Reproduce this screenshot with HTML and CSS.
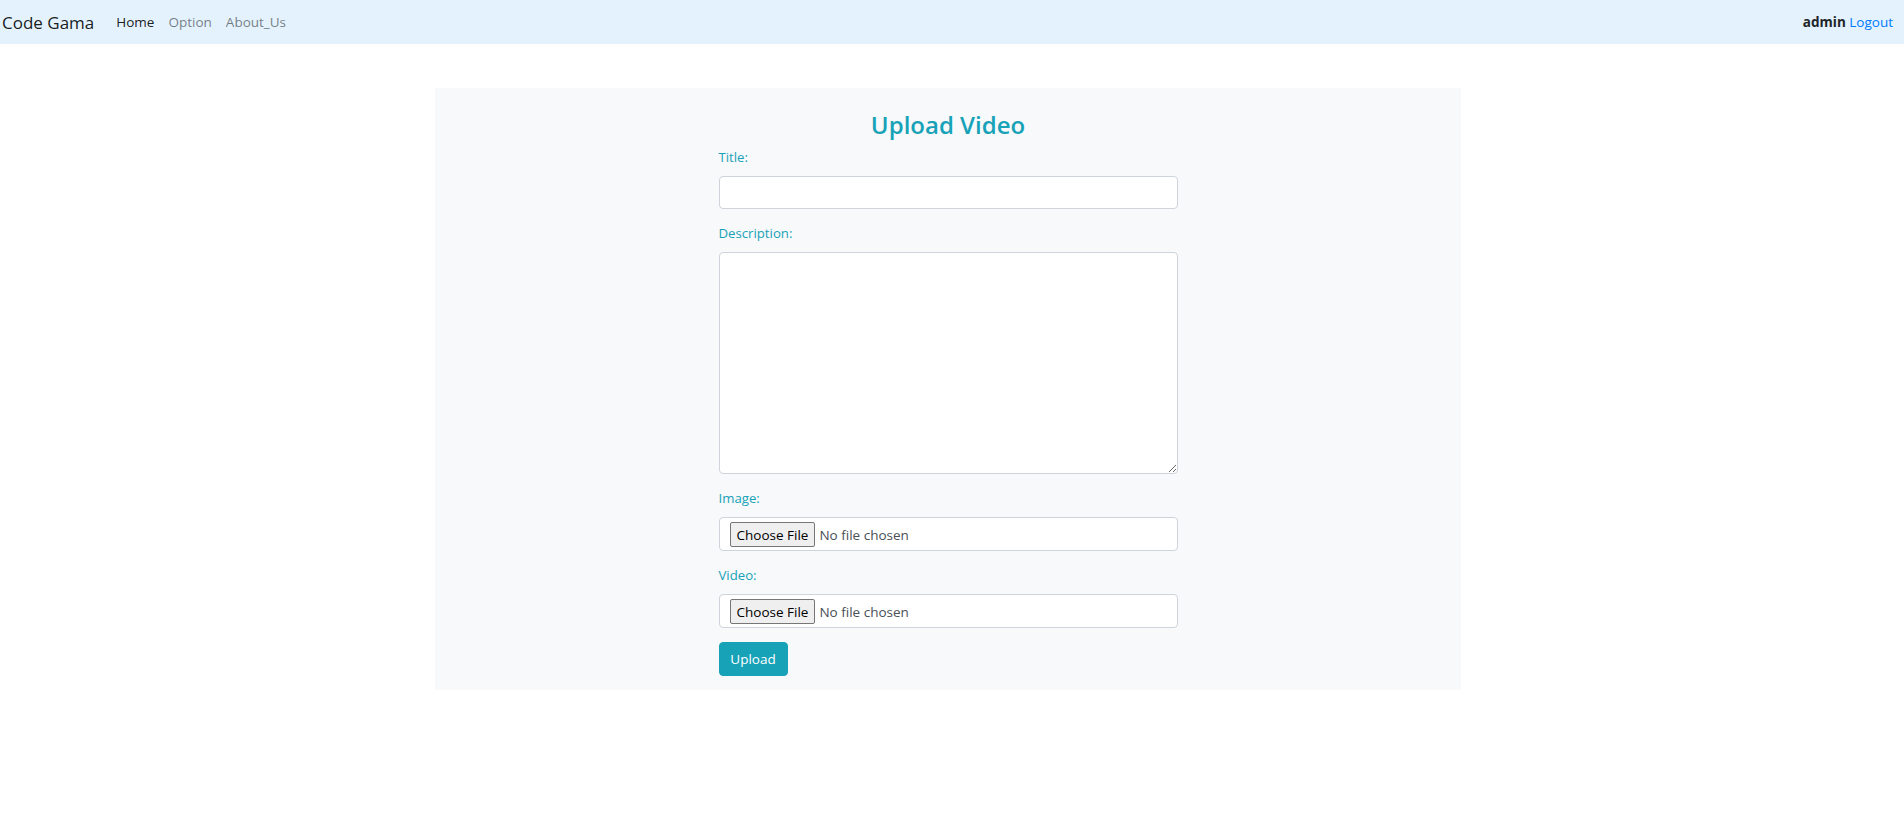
FILE: index.html
```html
<!DOCTYPE html>
<html lang="en">
<head>
<meta charset="utf-8">
<title>Upload Video</title>
<link rel="stylesheet" href="styles.css">
</head>
<body>
<nav class="navbar">
  <a class="brand" href="#">Code Gama</a>
  <ul class="nav-links">
    <li><a class="nav-link active" href="#">Home</a></li>
    <li><a class="nav-link" href="#">Option</a></li>
    <li><a class="nav-link" href="#">About_Us</a></li>
  </ul>
  <div class="nav-user">
    <span class="user-name">admin</span>
    <a class="logout" href="#">Logout</a>
  </div>
</nav>
<main class="page">
  <section class="card">
    <form class="upload-form">
      <h2 class="form-title">Upload Video</h2>
      <div class="form-group">
        <label class="form-label" for="title">Title:</label>
        <input class="form-control" id="title" type="text">
      </div>
      <div class="form-group">
        <label class="form-label" for="desc">Description:</label>
        <textarea class="form-control form-textarea" id="desc"></textarea>
      </div>
      <div class="form-group">
        <label class="form-label" for="image">Image:</label>
        <input class="form-control form-file" id="image" type="file">
      </div>
      <div class="form-group">
        <label class="form-label" for="video">Video:</label>
        <input class="form-control form-file" id="video" type="file">
      </div>
      <button class="btn-upload" type="button">Upload</button>
    </form>
  </section>
</main>
</body>
</html>
```
FILE: styles.css
```css
* { box-sizing: border-box; }
body {
  margin: 0;
  font-family: "Open Sans", "Noto Sans", sans-serif;
  color: #212529;
  background: #fff;
}
.navbar {
  height: 44px;
  background: #e3f2fd;
  display: flex;
  align-items: center;
  padding: 0 11px 0 2px;
}
.brand {
  font-size: 17px;
  color: rgba(0,0,0,.9);
  text-decoration: none;
  margin-right: 15px;
}
.nav-links {
  list-style: none;
  display: flex;
  margin: 0;
  padding: 0;
}
.nav-link {
  display: block;
  padding: 0 7px;
  font-size: 13.5px;
  color: rgba(0,0,0,.5);
  text-decoration: none;
}
.nav-link.active { color: rgba(0,0,0,.9); }
.nav-user {
  margin-left: auto;
  font-size: 13.5px;
}
.user-name { font-weight: 700; color: #212529; }
.logout { color: #007bff; text-decoration: none; }
.page { padding: 44px 8px 0 0; }
.card {
  width: 1026px;
  margin: 0 auto;
  background: #f8f9fa;
  padding: 21px 0 14px;
}
.upload-form {
  width: 459px;
  margin: 0 auto;
}
.form-title {
  margin: 0 0 7px;
  text-align: center;
  font-size: 24px;
  line-height: 31px;
  font-weight: 600;
  color: #17a2b8;
}
.form-group { margin-bottom: 14px; }
.form-label {
  display: block;
  font-size: 13.2px;
  line-height: 21px;
  color: #17a2b8;
  margin-bottom: 8px;
}
.form-control {
  display: block;
  width: 100%;
  height: 33px;
  background: #fff;
  border: 1px solid #ced4da;
  border-radius: 4px;
  font-family: inherit;
  font-size: 13px;
  color: #495057;
  padding: 4px 10px;
}
.form-textarea {
  height: 222px;
  resize: vertical;
}
.form-file {
  height: 34px;
  padding: 4px 10px;
  font-size: 13.5px;
  color: #495057;
}
.form-file::file-selector-button {
  font-family: inherit;
  font-size: 13.5px;
  color: #000;
  background: #efefef;
  border: 1px solid #767676;
  border-radius: 2px;
  height: 25px;
  padding: 0 6px;
  margin-right: 4px;
}
.btn-upload {
  display: block;
  width: 69px;
  height: 34px;
  margin-top: 1px;
  background: #17a2b8;
  border: 1px solid #17a2b8;
  border-radius: 4px;
  color: #fff;
  font-family: inherit;
  font-size: 13.5px;
  padding: 0;
}
```
